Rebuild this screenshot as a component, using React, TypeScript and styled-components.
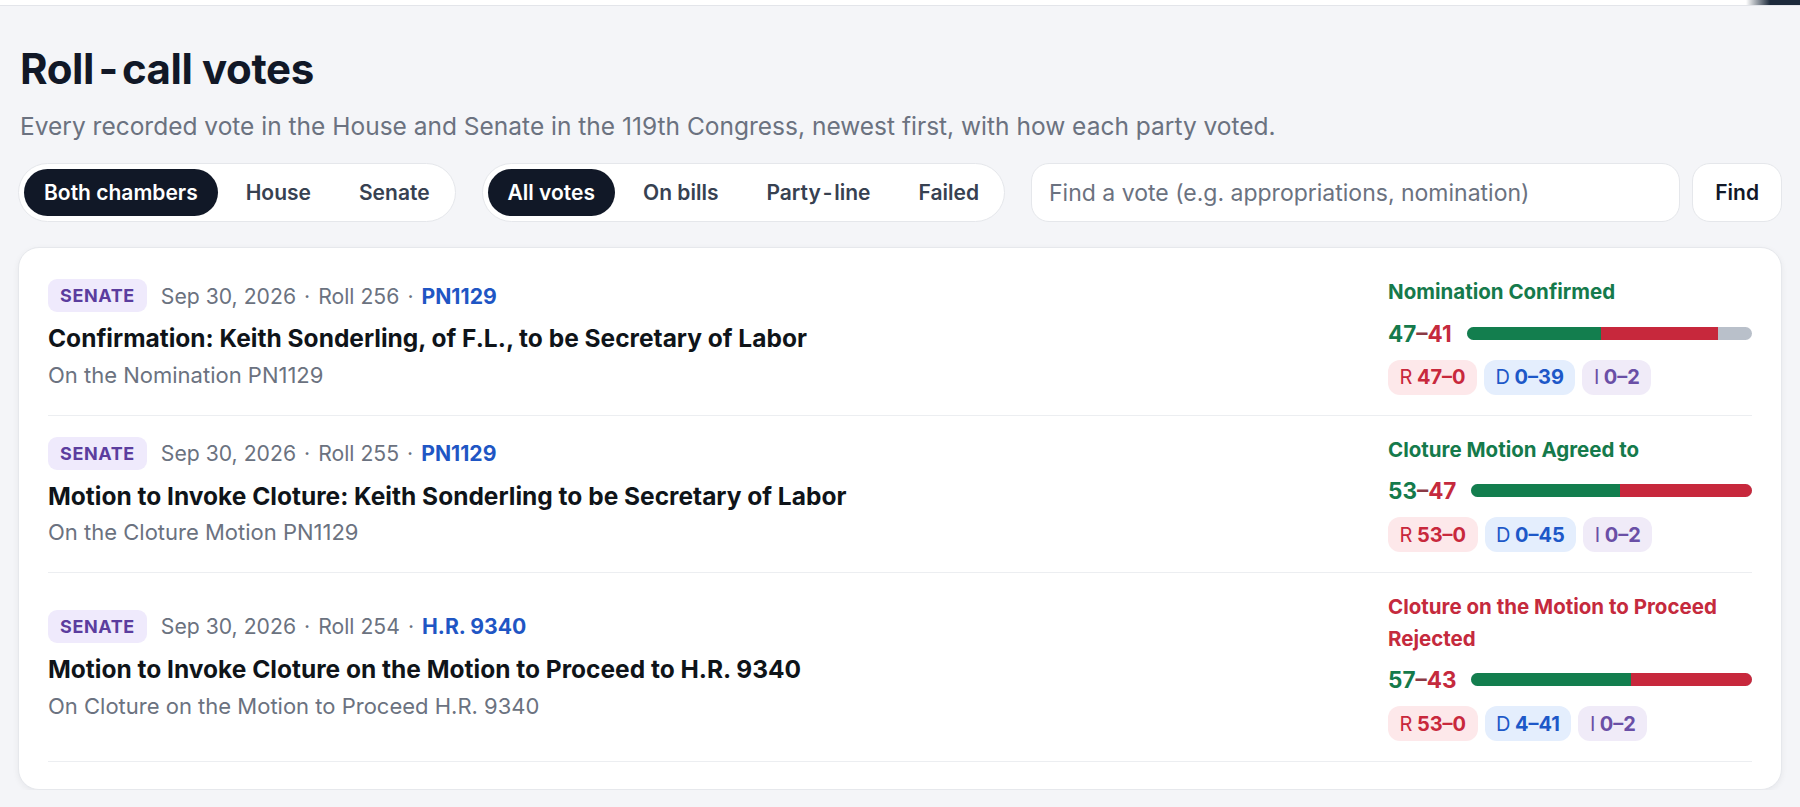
import React from 'react';
import styled, { createGlobalStyle, css } from 'styled-components';

type Tone = 'r' | 'd' | 'i';

interface PartyTally {
  party: string;
  tone: Tone;
  yea: number;
  nay: number;
}

interface Vote {
  chamber: string;
  date: string;
  roll: number;
  reference: string;
  title: string;
  question: string;
  result: string;
  passed: boolean;
  yea: number;
  nay: number;
  seats: number;
  parties: PartyTally[];
}

const votes: Vote[] = [
	{
		chamber: 'SENATE',
		date: 'Sep 30, 2026',
		roll: 256,
		reference: 'PN1129',
		title: 'Confirmation: Keith Sonderling, of F.L., to be Secretary of Labor',
		question: 'On the Nomination PN1129',
		result: 'Nomination Confirmed',
		passed: true,
		yea: 47,
		nay: 41,
		seats: 100,
		parties: [
			{ party: 'R', tone: 'r', yea: 47, nay: 0 },
			{ party: 'D', tone: 'd', yea: 0, nay: 39 },
			{ party: 'I', tone: 'i', yea: 0, nay: 2 }
		]
	},
	{
		chamber: 'SENATE',
		date: 'Sep 30, 2026',
		roll: 255,
		reference: 'PN1129',
		title: 'Motion to Invoke Cloture: Keith Sonderling to be Secretary of Labor',
		question: 'On the Cloture Motion PN1129',
		result: 'Cloture Motion Agreed to',
		passed: true,
		yea: 53,
		nay: 47,
		seats: 100,
		parties: [
			{ party: 'R', tone: 'r', yea: 53, nay: 0 },
			{ party: 'D', tone: 'd', yea: 0, nay: 45 },
			{ party: 'I', tone: 'i', yea: 0, nay: 2 }
		]
	},
	{
		chamber: 'SENATE',
		date: 'Sep 30, 2026',
		roll: 254,
		reference: 'H.R. 9340',
		title: 'Motion to Invoke Cloture on the Motion to Proceed to H.R. 9340',
		question: 'On Cloture on the Motion to Proceed H.R. 9340',
		result: 'Cloture on the Motion to Proceed Rejected',
		passed: false,
		yea: 57,
		nay: 43,
		seats: 100,
		parties: [
			{ party: 'R', tone: 'r', yea: 53, nay: 0 },
			{ party: 'D', tone: 'd', yea: 4, nay: 41 },
			{ party: 'I', tone: 'i', yea: 0, nay: 2 }
		]
	}
];

const GREEN = '#157a4b';
const RED = '#c52a3d';

const toneColors: Record<Tone, { bg: string; fg: string }> = {
	r: { bg: '#fde8ea', fg: '#c8283c' },
	d: { bg: '#e4eefd', fg: '#1d58c8' },
	i: { bg: '#f0ebf8', fg: '#6a4fa6' }
};

const GlobalStyle = createGlobalStyle`
  * { box-sizing: border-box; }
  html, body { margin: 0; padding: 0; background: #f4f5f8; }
  body {
    font-family: Inter, "Noto Sans", "Liberation Sans", sans-serif;
    color: #111827;
    -webkit-font-smoothing: antialiased;
  }
`;

const TopBar = styled.header`
  height: 6px;
  background: #fff;
  border-bottom: 1px solid #e3e5ea;
  display: flex;
  justify-content: flex-end;
  overflow: hidden;
`;

const TopBarEdge = styled.div`
  width: 54px;
  height: 5px;
  background: linear-gradient(to right, rgba(30, 41, 59, 0), #1c2a3b 45%);
`;

const Main = styled.main`
  padding: 38px 18px 0;
`;

// the live page shows its non-breaking hyphens with air on both sides
const NbHyphen = styled.span`
  margin: 0 0.11em;
`;

const Title = styled.h1`
  margin: 0 0 0 2px;
  font-size: 42px;
  line-height: 49px;
  font-weight: 700;
  letter-spacing: -0.4px;
  color: #111827;
`;

const Lead = styled.p`
  margin: 15px 0 0 2px;
  font-size: 24.5px;
  line-height: 36px;
  color: #6b7280;
`;

const FilterRow = styled.div`
  margin-top: 19px;
  display: flex;
  align-items: stretch;
  gap: 26px;
`;

const Segmented = styled.div`
  display: flex;
  gap: 8px;
  padding: 5px;
  background: #fff;
  border: 1px solid #e5e7eb;
  border-radius: 999px;
`;

const Pill = styled.button<{ $active?: boolean }>`
  font: inherit;
  font-size: 21px;
  line-height: 27px;
  font-weight: 600;
  padding: 10px 20px;
  border: 0;
  border-radius: 999px;
  background: transparent;
  color: #374151;
  cursor: pointer;
  ${p => p.$active && css`
    background: #111827;
    color: #fff;
  `}
`;

const SearchForm = styled.form`
  flex: 1;
  display: flex;
  gap: 12px;
`;

const SearchInput = styled.input`
  flex: 1;
  height: 59px;
  padding: 0 17px;
  font: inherit;
  font-size: 23px;
  color: #111827;
  background: #fff;
  border: 1px solid #e5e7eb;
  border-radius: 18px;
  outline: none;
  &::placeholder { color: #6b7280; }
`;

const FindButton = styled.button`
  height: 59px;
  padding: 0 22px;
  font: inherit;
  font-size: 21px;
  font-weight: 600;
  color: #111827;
  background: #fff;
  border: 1px solid #e5e7eb;
  border-radius: 18px;
  cursor: pointer;
`;

const Card = styled.section`
  margin-top: 25px;
  padding: 10px 29px 27px;
  background: #fff;
  border: 1px solid #e6e8ec;
  border-radius: 21px;
  box-shadow: 0 2px 6px rgba(16, 24, 40, 0.06);
`;

const Row = styled.article`
  display: flex;
  align-items: center;
  gap: 40px;
  padding: 18px 0 20px;
  border-bottom: 1px solid #eceef1;
`;

const Info = styled.div`
  flex: 1;
  min-width: 0;
`;

const MetaRow = styled.div`
  display: flex;
  align-items: center;
  gap: 14px;
`;

const ChamberBadge = styled.span`
  font-size: 18px;
  line-height: 27px;
  font-weight: 700;
  letter-spacing: 0.6px;
  padding: 3px 12px;
  border-radius: 9px;
  background: #efeafc;
  color: #5b3d9e;
`;

const Meta = styled.div`
  display: flex;
  align-items: center;
  gap: 8px;
  font-size: 21.2px;
  color: #6b7280;
`;

const RefLink = styled.a`
  font-weight: 700;
  color: #1f56c4;
  text-decoration: none;
`;

const VoteTitle = styled.h2`
  margin: 10px 0 0;
  font-size: 24.5px;
  line-height: 33.6px;
  font-weight: 700;
  color: #0f1419;
`;

const Question = styled.div`
  margin-top: 4px;
  font-size: 22px;
  line-height: 31.5px;
  color: #6b7280;
`;

const Outcome = styled.div`
  width: 364px;
  flex-shrink: 0;
`;

const Result = styled.div<{ $passed: boolean }>`
  font-size: 20.5px;
  line-height: 31.5px;
  font-weight: 700;
  color: ${p => (p.$passed ? GREEN : RED)};
`;

const ScoreRow = styled.div`
  margin-top: 10px;
  display: flex;
  align-items: center;
  gap: 15px;
`;

const Score = styled.span`
  font-size: 22.5px;
  line-height: 31px;
  font-weight: 700;
  white-space: nowrap;
`;

const Yea = styled.span`
  color: ${GREEN};
`;

const Nay = styled.span`
  color: ${RED};
`;

const Dash = styled.span`
  color: #8a3a45;
`;

const Bar = styled.div`
  flex: 1;
  height: 13px;
  display: flex;
  border-radius: 999px;
  overflow: hidden;
  background: #b9c0ca;
`;

const BarPart = styled.div<{ $kind: 'yea' | 'nay' }>`
  height: 100%;
  background: ${p => (p.$kind === 'yea' ? '#137e4e' : '#c7283c')};
`;

const Chips = styled.div`
  margin-top: 11px;
  display: flex;
  gap: 7px;
`;

const Chip = styled.span<{ $tone: Tone }>`
  display: inline-flex;
  align-items: center;
  gap: 4.5px;
  height: 35px;
  padding: 0 11.5px;
  border-radius: 12px;
  font-size: 20px;
  background: ${p => toneColors[p.$tone].bg};
  color: ${p => toneColors[p.$tone].fg};
`;

const ChipParty = styled.span`
  font-weight: 400;
`;

const ChipTally = styled.span`
  font-weight: 700;
`;

const withHyphen = (text: string) => {
	const [head, tail] = text.split('-');
	return <>{head}<NbHyphen>‑</NbHyphen>{tail}</>;
};

const VoteRow = ({ vote }: { vote: Vote }) => {
	const yeaPct = (vote.yea / vote.seats) * 100;
	const nayPct = (vote.nay / vote.seats) * 100;

	return <Row>
		<Info>
			<MetaRow>
				<ChamberBadge>{vote.chamber}</ChamberBadge>
				<Meta>
					<span>{vote.date}</span>
					<span>·</span>
					<span>Roll {vote.roll}</span>
					<span>·</span>
					<RefLink href='#'>{vote.reference}</RefLink>
				</Meta>
			</MetaRow>
			<VoteTitle>{vote.title}</VoteTitle>
			<Question>{vote.question}</Question>
		</Info>
		<Outcome>
			<Result $passed={vote.passed}>{vote.result}</Result>
			<ScoreRow>
				<Score>
					<Yea>{vote.yea}</Yea><Dash>–</Dash><Nay>{vote.nay}</Nay>
				</Score>
				<Bar>
					<BarPart $kind='yea' style={{ width: `${yeaPct}%` }} />
					<BarPart $kind='nay' style={{ width: `${nayPct}%` }} />
				</Bar>
			</ScoreRow>
			<Chips>
				{vote.parties.map(p => (
					<Chip key={p.party} $tone={p.tone}>
						<ChipParty>{p.party}</ChipParty>
						<ChipTally>{p.yea}–{p.nay}</ChipTally>
					</Chip>
				))}
			</Chips>
		</Outcome>
	</Row>;
};

const App = () => {
	return <>
		<GlobalStyle />
		<TopBar>
			<TopBarEdge />
		</TopBar>
		<Main>
			<Title>{withHyphen('Roll-call votes')}</Title>
			<Lead>Every recorded vote in the House and Senate in the 119th Congress, newest first, with how each party voted.</Lead>
			<FilterRow>
				<Segmented>
					<Pill $active>Both chambers</Pill>
					<Pill>House</Pill>
					<Pill>Senate</Pill>
				</Segmented>
				<Segmented>
					<Pill $active>All votes</Pill>
					<Pill>On bills</Pill>
					<Pill>{withHyphen('Party-line')}</Pill>
					<Pill>Failed</Pill>
				</Segmented>
				<SearchForm onSubmit={e => e.preventDefault()}>
					<SearchInput placeholder='Find a vote (e.g. appropriations, nomination)' />
					<FindButton type='submit'>Find</FindButton>
				</SearchForm>
			</FilterRow>
			<Card>
				{votes.map(v => <VoteRow key={v.roll} vote={v} />)}
			</Card>
		</Main>
	</>;
};

export default App;
